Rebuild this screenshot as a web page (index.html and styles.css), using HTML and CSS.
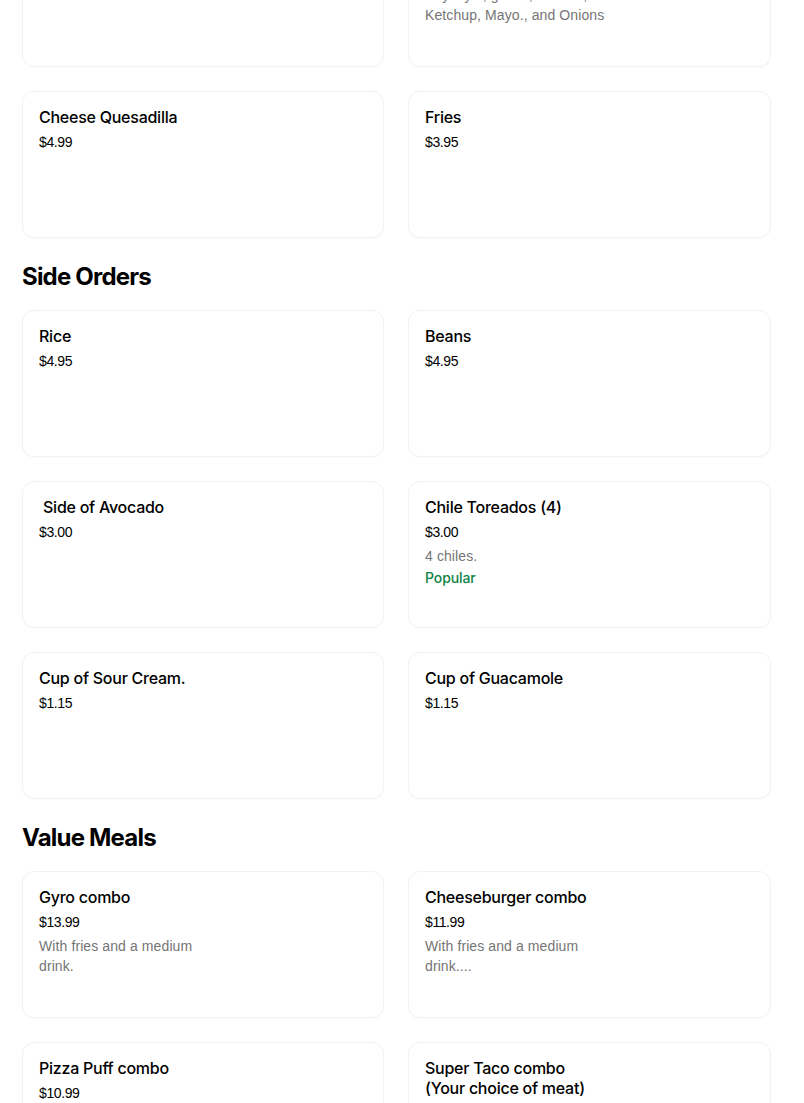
FILE: index.html
```html
<!DOCTYPE html>
<html lang="en">
<head>
<meta charset="utf-8">
<title>Menu</title>
<link rel="stylesheet" href="styles.css">
</head>
<body>
<main class="menu">
  <section class="section first">
    <div class="grid">
      <div class="card">
        <div class="title">Gyro</div>
        <div class="price">$9.99</div>
      </div>
      <div class="card">
        <div class="title">Cheeseburger</div>
        <div class="price">$7.99</div>
        <div class="desc">Any style, grilled, Lettuce,<br>Ketchup, Mayo., and Onions</div>
      </div>
      <div class="card">
        <div class="title">Cheese Quesadilla</div>
        <div class="price">$4.99</div>
      </div>
      <div class="card">
        <div class="title">Fries</div>
        <div class="price">$3.95</div>
      </div>
    </div>
  </section>

  <section class="section">
    <h2 class="heading">Side Orders</h2>
    <div class="grid">
      <div class="card">
        <div class="title">Rice</div>
        <div class="price">$4.95</div>
      </div>
      <div class="card">
        <div class="title">Beans</div>
        <div class="price">$4.95</div>
      </div>
      <div class="card">
        <div class="title">&nbsp;Side of Avocado</div>
        <div class="price">$3.00</div>
      </div>
      <div class="card">
        <div class="title">Chile Toreados (4)</div>
        <div class="price">$3.00</div>
        <div class="desc">4 chiles.</div>
        <div class="tag">Popular</div>
      </div>
      <div class="card">
        <div class="title">Cup of Sour Cream.</div>
        <div class="price">$1.15</div>
      </div>
      <div class="card">
        <div class="title">Cup of Guacamole</div>
        <div class="price">$1.15</div>
      </div>
    </div>
  </section>

  <section class="section">
    <h2 class="heading">Value Meals</h2>
    <div class="grid">
      <div class="card">
        <div class="title">Gyro combo</div>
        <div class="price">$13.99</div>
        <div class="desc">With fries and a medium drink.</div>
      </div>
      <div class="card">
        <div class="title">Cheeseburger combo</div>
        <div class="price">$11.99</div>
        <div class="desc">With fries and a medium drink....</div>
      </div>
      <div class="card">
        <div class="title">Pizza Puff combo</div>
        <div class="price">$10.99</div>
      </div>
      <div class="card">
        <div class="title">Super Taco combo<br>(Your choice of meat)</div>
        <div class="price">$11.99</div>
      </div>
    </div>
  </section>
</main>
</body>
</html>
```

FILE: styles.css
```css
html, body {
  margin: 0;
  padding: 0;
  background: #ffffff;
}

body {
  font-family: Inter, "Liberation Sans", Arial, sans-serif;
  color: #000000;
  overflow: hidden;
}

.menu {
  width: 749px;
  padding-left: 22px;
  margin-top: -80px;
}

.heading {
  margin: 23px 0 17px;
  font-family: Inter, "Liberation Sans", sans-serif;
  font-size: 24px;
  line-height: 32px;
  font-weight: 700;
  letter-spacing: -0.8px;
}

.grid {
  display: grid;
  grid-template-columns: 362px 363px;
  column-gap: 24px;
  row-gap: 24px;
}

.card {
  box-sizing: border-box;
  height: 147px;
  border: 1px solid #f2f2f2;
  border-radius: 12px;
  padding: 15px 16px;
  background: #ffffff;
  box-shadow: 0 1px 2px rgba(0, 0, 0, 0.02);
}

.title {
  font-family: Inter, "Liberation Sans", sans-serif;
  font-size: 16px;
  line-height: 20px;
  font-weight: 500;
  letter-spacing: -0.25px;
  color: #000000;
}

.price {
  margin-top: 5px;
  font-family: "Liberation Sans", Arial, sans-serif;
  font-size: 14px;
  line-height: 20px;
  color: #000000;
  letter-spacing: -0.4px;
}

.desc {
  margin-top: 4px;
  max-width: 190px;
  font-family: "Liberation Sans", Arial, sans-serif;
  font-size: 14px;
  line-height: 20px;
  color: #757575;
  letter-spacing: 0.1px;
}

.tag {
  margin-top: 2px;
  font-family: Inter, "Liberation Sans", sans-serif;
  font-size: 14px;
  line-height: 20px;
  font-weight: 500;
  letter-spacing: -0.1px;
  color: #0e8345;
}
```
